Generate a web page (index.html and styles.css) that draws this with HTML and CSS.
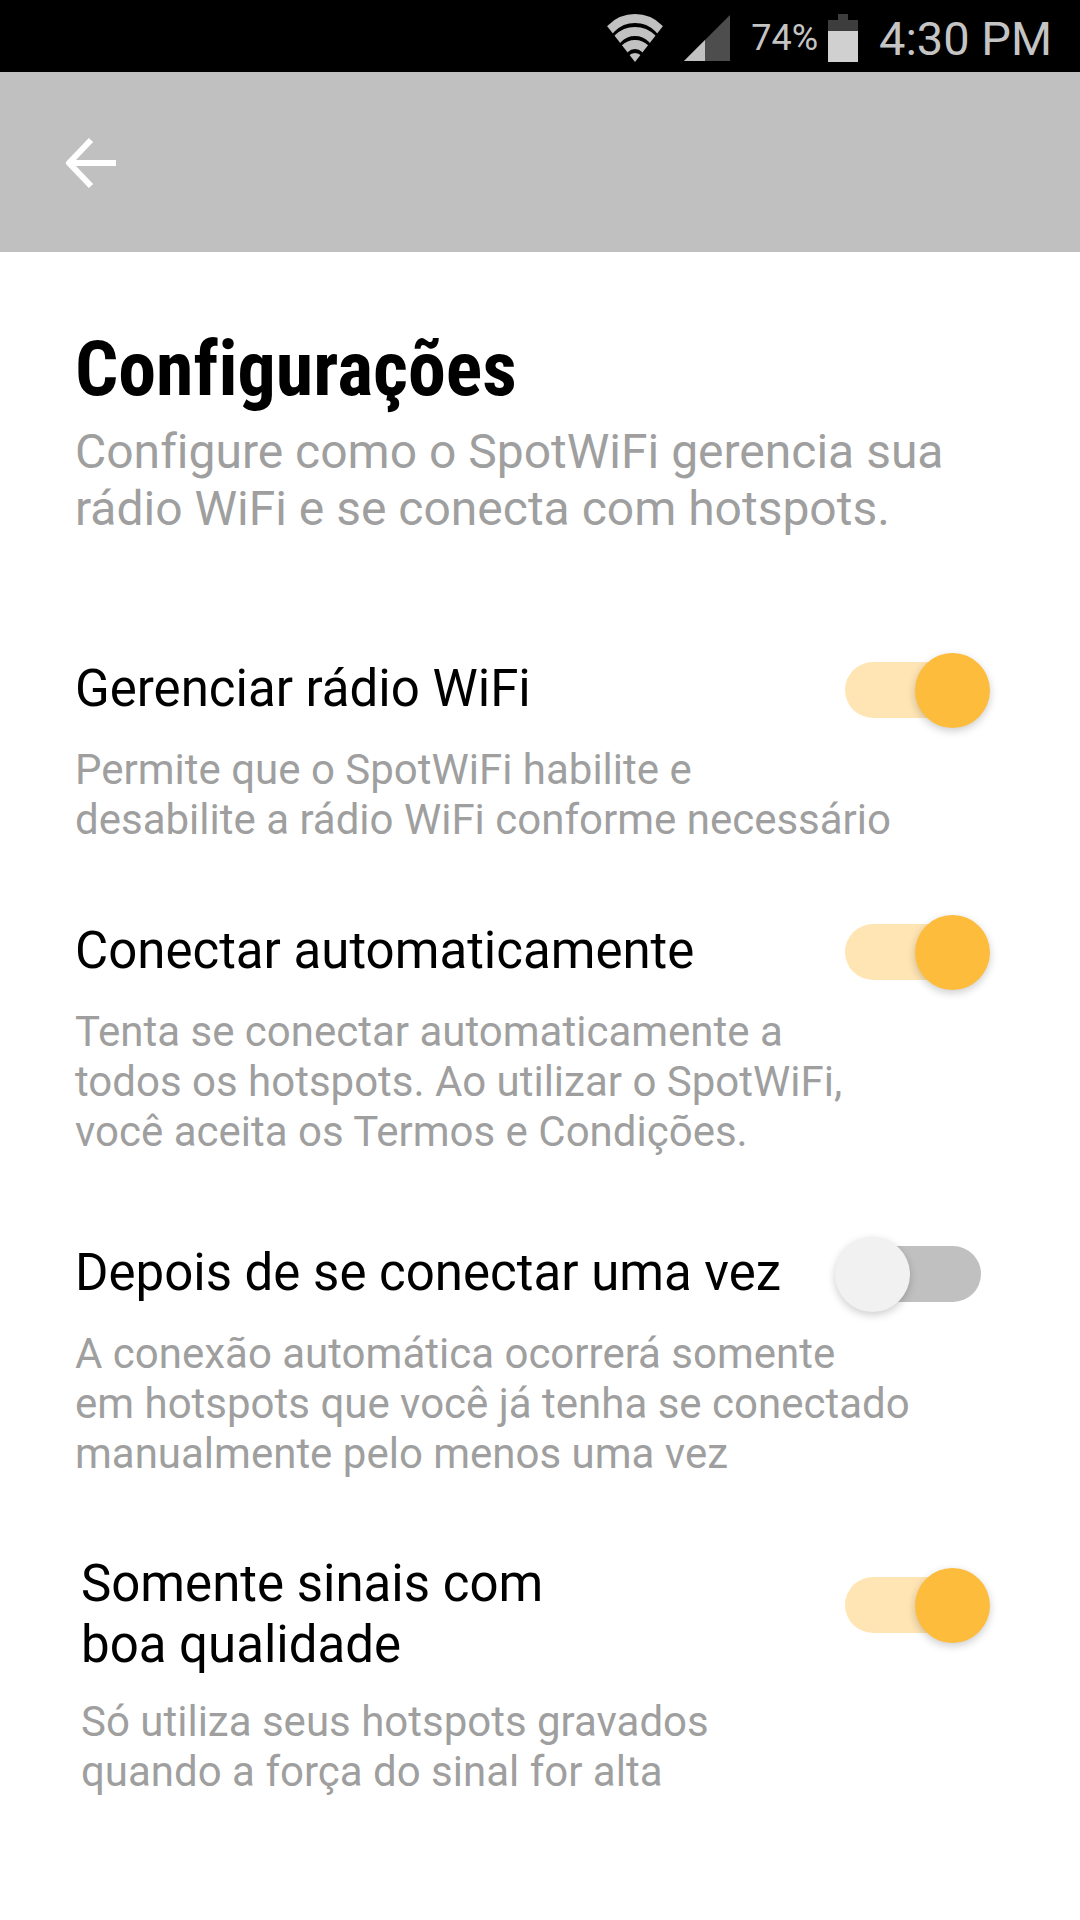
FILE: index.html
```html
<!DOCTYPE html>
<html lang="pt-BR">
<head>
<meta charset="utf-8">
<meta name="viewport" content="width=device-width, initial-scale=1">
<title>Configurações</title>
<link rel="stylesheet" href="styles.css">
</head>
<body>
<div class="status-bar">
  <svg class="wifi" viewBox="0 0 56 48" aria-hidden="true">
    <clipPath id="fan"><path d="M28 48L0 12V0H56V12Z"/></clipPath>
    <g clip-path="url(#fan)" fill="none" stroke="#c1c1c1" stroke-width="9">
      <circle cx="28" cy="38" r="33.5"/><circle cx="28" cy="41.5" r="24"/><circle cx="28" cy="45" r="14.5"/>
      <circle cx="28" cy="48" r="9" fill="#c1c1c1" stroke="none"/>
    </g>
  </svg>
  <svg class="signal" viewBox="0 0 46 46" aria-hidden="true">
    <path fill="#4d4d4d" d="M46 0V46H0Z"/><path fill="#c1c1c1" d="M21 25V46H0Z"/>
  </svg>
  <span class="percent">74%</span>
  <svg class="battery" viewBox="0 0 30 48" aria-hidden="true">
    <path fill="#3d3d3d" d="M10 0H20V6H30V18H0V6H10Z"/><path fill="#d0d0d0" d="M0 17H30V48H0Z"/>
  </svg>
  <time class="clock">4:30 PM</time>
</div>
<header class="app-bar">
  <button class="back" type="button" aria-label="Voltar">
    <svg viewBox="0 0 52 52" aria-hidden="true"><path d="M51 26H5M26 3L4 26L26 49" fill="none" stroke="#fff" stroke-width="6" stroke-linejoin="round"/></svg>
  </button>
</header>
<main class="content">
  <h1 class="title">Configurações</h1>
  <p class="intro">Configure como o SpotWiFi gerencia sua<br>rádio WiFi e se conecta com hotspots.</p>
  <section class="setting">
    <div class="row"><label for="radio">Gerenciar rádio WiFi</label><input class="switch" id="radio" type="checkbox" role="switch" checked></div>
    <p class="note">Permite que o SpotWiFi habilite e<br>desabilite a rádio WiFi conforme necessário</p>
  </section>
  <section class="setting">
    <div class="row"><label for="auto">Conectar automaticamente</label><input class="switch" id="auto" type="checkbox" role="switch" checked></div>
    <p class="note">Tenta se conectar automaticamente a<br>todos os hotspots. Ao utilizar o SpotWiFi,<br>você aceita os Termos e Condições.</p>
  </section>
  <section class="setting">
    <div class="row"><label for="once">Depois de se conectar uma vez</label><input class="switch" id="once" type="checkbox" role="switch"></div>
    <p class="note">A conexão automática ocorrerá somente<br>em hotspots que você já tenha se conectado<br>manualmente pelo menos uma vez</p>
  </section>
  <section class="setting setting-tall">
    <div class="row"><label for="quality">Somente sinais com<br>boa qualidade</label><input class="switch" id="quality" type="checkbox" role="switch" checked></div>
    <p class="note">Só utiliza seus hotspots gravados<br>quando a força do sinal for alta</p>
  </section>
</main>
</body>
</html>
```
FILE: styles.css
```css
* { box-sizing: border-box; }
body { margin: 0; background: #fff; color: #000; font-family: Roboto, sans-serif; font-variant-ligatures: none; }
h1, p { margin: 0; }
.status-bar { height: 72px; padding: 4px 28px 0 0; background: #000; color: #c4c4c4; display: flex; align-items: center; justify-content: flex-end; }
.wifi { width: 56px; height: 48px; margin-right: 21px; }
.signal { width: 46px; height: 46px; margin-right: 21px; }
.percent { font-size: 36px; margin-right: 10px; }
.battery { width: 30px; height: 48px; margin-right: 21px; }
.clock { font-size: 47px; }
.app-bar { height: 180px; padding: 2px 0 0 65px; background: #c0c0c0; display: flex; align-items: center; }
.back { padding: 0; border: 0; background: none; display: flex; }
.back svg { width: 52px; height: 52px; }
.content { padding: 77px 75px 0; }
.title { font: bold 76px/80px "Roboto Condensed", "Open Sans Condensed", "Arial Narrow", "Liberation Sans", sans-serif; font-variant-ligatures: none; }
.intro { margin-top: 14px; font-size: 48px; line-height: 57px; color: #9f9f9f; }
.intro + .setting { margin-top: 110px; }
.setting { margin-top: 74px; }
.intro + .setting + .setting { margin-top: 64px; }
.row { display: flex; align-items: center; justify-content: space-between; min-height: 82px; }
.row label { font-size: 51px; line-height: 61px; }
.note { margin-top: 16px; font-size: 42px; line-height: 50px; color: #9f9f9f; }
.switch { appearance: none; position: relative; flex: none; width: 136px; height: 56px; margin: 4px 24px 0 0; border-radius: 28px; background: #ffe5b4; }
.switch::before { content: ""; position: absolute; top: -9px; right: -9px; width: 75px; height: 75px; border-radius: 50%; background: #febc3d; box-shadow: 0 3px 8px #0003; }
.switch:not(:checked) { background: #c0c0c0; }
.switch:not(:checked)::before { right: auto; left: -10px; background: #f1f1f1; }
.setting-tall { padding-left: 6px; }
.setting-tall .row { align-items: flex-start; }
.setting-tall .switch { margin-top: 24px; }
.setting-tall .note { margin-top: 22px; }
```
